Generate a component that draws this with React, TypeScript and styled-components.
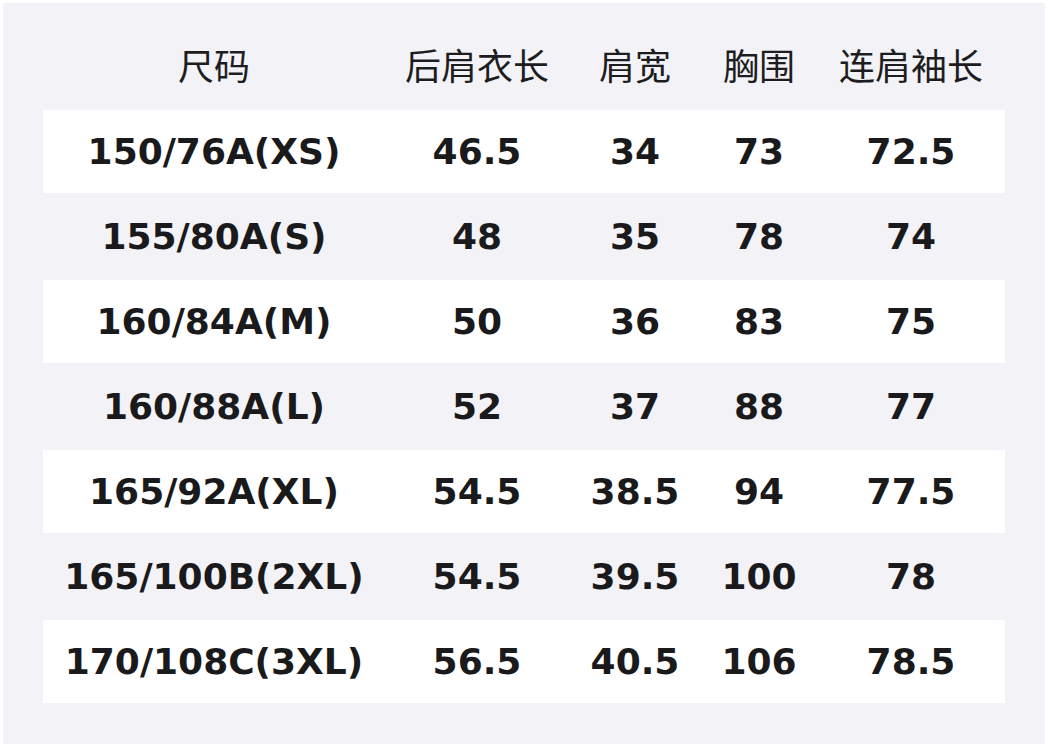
import React from "react";
import styled, { createGlobalStyle } from "styled-components";

const GlobalStyle = createGlobalStyle`
  html, body { margin: 0; padding: 0; background: #ffffff; }
  #root { width: 1048px; height: 748px; }
`;

const COLS = "342px 184px 132px 116px 188px";

const Panel = styled.div`
  margin: 3px 3px 4px 3px;
  height: 741px;
  box-sizing: border-box;
  background: #f3f3f7;
  padding: 0 40px;
  display: flex;
  flex-direction: column;
  gap: 2px;
`;

const HeaderRow = styled.div`
  display: grid;
  grid-template-columns: ${COLS};
  height: 105px;
  box-sizing: border-box;
  padding-top: 16px;
  align-items: center;
`;

const HeaderCell = styled.div`
  text-align: center;
  font-family: "Noto Sans CJK SC", "Noto Sans", sans-serif;
  font-weight: 400;
  font-size: 36px;
  line-height: 36px;
  color: #1d1d1f;
`;

const Row = styled.div<{ $white: boolean }>`
  display: grid;
  grid-template-columns: ${COLS};
  height: 83px;
  align-items: center;
  background: ${(p) => (p.$white ? "#ffffff" : "transparent")};
`;

const Cell = styled.div`
  text-align: center;
  font-family: "DejaVu Sans", sans-serif;
  font-weight: 700;
  font-size: 36px;
  line-height: 36px;
  color: #1a1a1c;
  white-space: nowrap;
`;

const headers = ["尺码", "后肩衣长", "肩宽", "胸围", "连肩袖长"];
const rows = [
  ["150/76A(XS)", "46.5", "34", "73", "72.5"],
  ["155/80A(S)", "48", "35", "78", "74"],
  ["160/84A(M)", "50", "36", "83", "75"],
  ["160/88A(L)", "52", "37", "88", "77"],
  ["165/92A(XL)", "54.5", "38.5", "94", "77.5"],
  ["165/100B(2XL)", "54.5", "39.5", "100", "78"],
  ["170/108C(3XL)", "56.5", "40.5", "106", "78.5"],
];

export default function App() {
  return (
    <>
      <GlobalStyle />
      <Panel>
        <HeaderRow>
          {headers.map((h) => (
            <HeaderCell key={h}>{h}</HeaderCell>
          ))}
        </HeaderRow>
        {rows.map((r, i) => (
          <Row key={r[0]} $white={i % 2 === 0}>
            {r.map((c, j) => (
              <Cell key={j}>{c}</Cell>
            ))}
          </Row>
        ))}
      </Panel>
    </>
  );
}
